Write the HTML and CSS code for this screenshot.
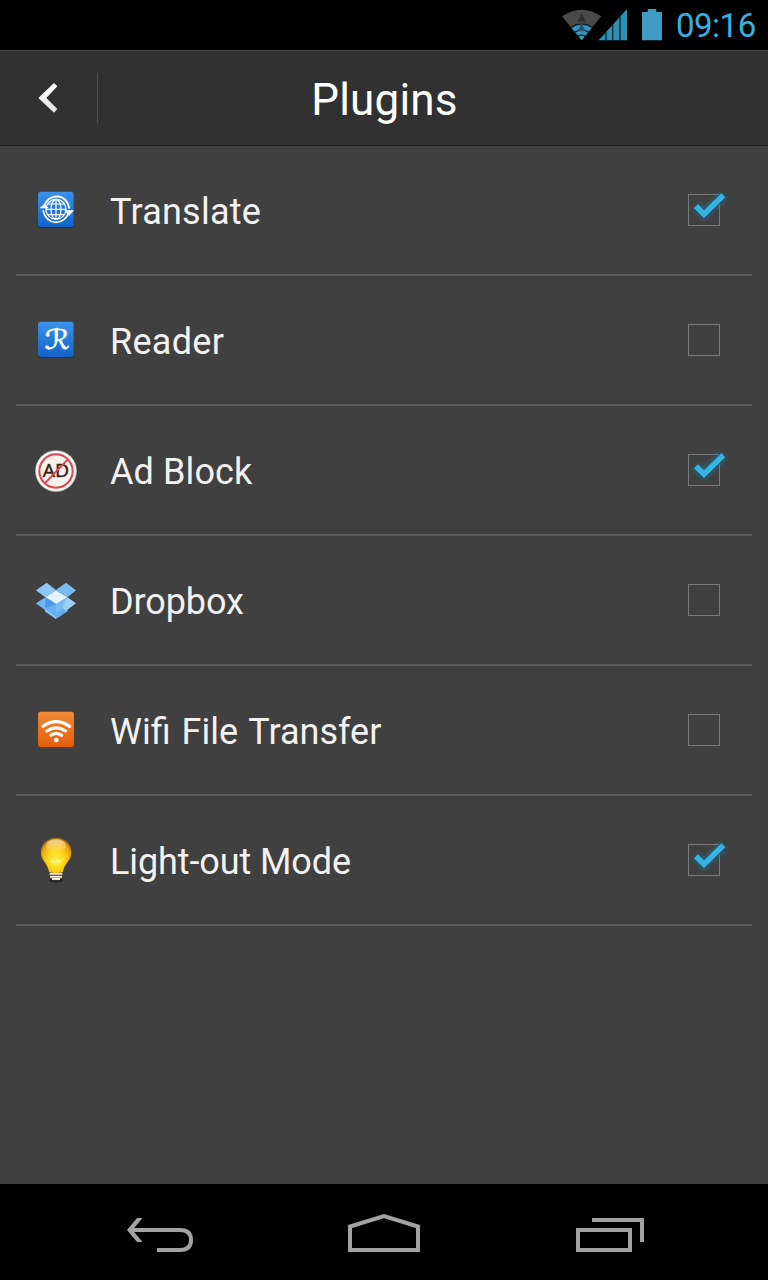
FILE: index.html
```
<!DOCTYPE html>
<html lang="en">
<head>
<meta charset="utf-8">
<title>Plugins</title>
<link rel="stylesheet" href="styles.css">
</head>
<body>
<svg class="defs" width="0" height="0" aria-hidden="true">
  <defs>
    <linearGradient id="blue" x1="0" y1="0" x2="0" y2="1"><stop offset="0" stop-color="#3b93ea"/><stop offset="1" stop-color="#1263c8"/></linearGradient>
    <linearGradient id="orange" x1="0" y1="0" x2="0" y2="1"><stop offset="0" stop-color="#f48a34"/><stop offset="1" stop-color="#e35d0c"/></linearGradient>
    <radialGradient id="bulb" cx=".5" cy=".62" r=".62"><stop offset="0" stop-color="#fff04a"/><stop offset=".45" stop-color="#ffd61a"/><stop offset=".8" stop-color="#eda50c"/><stop offset="1" stop-color="#b9720a"/></radialGradient>
    <linearGradient id="shine" x1="0" y1="0" x2="0" y2="1"><stop offset="0" stop-color="#fff" stop-opacity=".6"/><stop offset="1" stop-color="#fff" stop-opacity="0"/></linearGradient>
    <linearGradient id="arrow" x1="0" y1="0" x2="0" y2="1"><stop offset="0" stop-color="#fff"/><stop offset="1" stop-color="#e2e2e2"/></linearGradient>
    <filter id="glow" x="-50%" y="-50%" width="200%" height="200%"><feGaussianBlur stdDeviation="7"/></filter>
    <symbol id="check" viewBox="0 0 144 144">
      <rect x="19.500" y="25.500" width="93" height="93" fill="none" stroke="#7b7b7b" stroke-width="3"/>
      <path d="M42 61L66 85L124 28" fill="none" stroke="#1489b5" stroke-width="26" opacity=".6" filter="url(#glow)"/>
      <path d="M42 61L66 85L124 28" fill="none" stroke="#304850" stroke-width="22"/>
      <path d="M42 61L66 85L124 28" fill="none" stroke="#35b3e5" stroke-width="17"/>
    </symbol>
    <symbol id="box" viewBox="0 0 144 144">
      <rect x="19.500" y="25.500" width="93" height="93" fill="none" stroke="#7b7b7b" stroke-width="3"/>
    </symbol>
  </defs>
</svg>
<div class="screen">
  <div class="status">
    <svg class="status-icons" viewBox="0 0 360 150">
      <path d="M30 49Q89 10 148 49L89 121Z" fill="#4a4a4a"/>
      <path d="M89 40L77 65H101Z" fill="#303030"/>
      <path d="M57 82Q89 62 121 82L89 121Z" fill="#3796bd"/>
      <path d="M57 82Q89 62 121 82M67 97Q89 82 111 97M78 109Q89 102 100 109" fill="none" stroke="#06212d" stroke-width="4"/>
      <path d="M89 67L78 94H100Z" fill="#28576a"/>
      <path d="M140 121L225 27V121Z" fill="#3090b3"/>
      <path d="M162 96V121M182 74V121M204 50V121" stroke="#062735" stroke-width="4"/>
      <path d="M270 36H287V27H313V36H330V121H270Z" fill="#3f9cc4"/>
    </svg>
    <span class="clock">09:16</span>
  </div>
  <header class="bar">
    <div class="back"><svg class="back-icon" viewBox="0 0 60 96"><path d="M48 3L58 13L25 48L58 81L48 92L1 48Z" fill="url(#arrow)"/></svg></div>
    <h1 class="title">Plugins</h1>
  </header>
  <main class="list">
    <div class="row">
      <svg class="icon" viewBox="0 0 216 180">
        <rect x="53" y="37" width="109" height="108" rx="10" fill="#29313c"/>
        <rect x="54" y="35" width="107" height="106" rx="9" fill="url(#blue)"/>
        <g fill="none" stroke="#fff" stroke-width="3.600">
          <circle cx="108" cy="88" r="30"/><ellipse cx="108" cy="88" rx="15" ry="30"/><path d="M108 58V118M78 88H138M83 72H133M83 104H133"/>
          <path d="M72 78Q82 50 111 49Q142 51 148 86M146 98Q136 125 108 127Q77 125 69 91" stroke-width="5"/>
        </g>
        <path d="M58 85L74 71L86 85ZM133 91H162L147 108Z" fill="#fff"/>
      </svg>
      <span class="label translate">Translate</span>
      <svg class="toggle"><use href="#check"/></svg>
    </div>
    <div class="row">
      <svg class="icon" viewBox="0 0 216 180">
        <rect x="53" y="37" width="109" height="108" rx="10" fill="#29313c"/>
        <rect x="54" y="35" width="107" height="106" rx="9" fill="url(#blue)"/>
        <text class="script-r" x="74" y="116" textLength="75" lengthAdjust="spacingAndGlyphs">ℛ</text>
      </svg>
      <span class="label reader">Reader</span>
      <svg class="toggle"><use href="#box"/></svg>
    </div>
    <div class="row">
      <svg class="icon" viewBox="0 0 216 180">
        <circle cx="108" cy="93" r="63" fill="#8d8d8b"/>
        <circle cx="108" cy="93" r="61" fill="#f6f3ed"/>
        <text class="ad" x="108" y="112" text-anchor="middle" textLength="79" lengthAdjust="spacingAndGlyphs">AD</text>
        <circle cx="108" cy="93" r="50" fill="none" stroke="#da4550" stroke-width="6"/>
        <path d="M74 130L143 59" stroke="#da4550" stroke-width="6"/>
      </svg>
      <span class="label adblock">Ad Block</span>
      <svg class="toggle"><use href="#check"/></svg>
    </div>
    <div class="row">
      <svg class="icon" viewBox="0 0 216 180">
        <path d="M75 111L108 93L143 111V124L108 147L75 124Z" fill="#64adf0"/>
        <path d="M75 111L108 97V147L75 124Z" fill="#8bc8fa"/>
        <path d="M48 61L80 38L108 60L76 82Z" fill="#8ec8f6"/>
        <path d="M108 60L138 38L168 61L142 82Z" fill="#78bbf2"/>
        <path d="M48 100L76 82L108 102L78 122Z" fill="#72b7f3"/>
        <path d="M108 102L142 82L168 100L138 122Z" fill="#9cd0fa"/>
        <path d="M76 82L108 61L142 82L108 102Z" fill="#e5f5ff"/>
        <path d="M76 82L108 102V140L78 119Z" fill="#68aef0"/>
        <path d="M76 82V113L108 102Z" fill="#4798e9"/>
        <path d="M108 102L142 82L124 119L108 129Z" fill="#79bdf6"/>
      </svg>
      <span class="label dropbox">Dropbox</span>
      <svg class="toggle"><use href="#box"/></svg>
    </div>
    <div class="row">
      <svg class="icon" viewBox="0 0 216 180">
        <rect x="53" y="36" width="110" height="108" rx="9" fill="#633a22"/>
        <rect x="54" y="35" width="108" height="106" rx="8" fill="url(#orange)"/>
        <path d="M69 79Q108 51 149 79M81 93Q108 74 137 93M93 106Q108 95 125 106" fill="none" stroke="#fff" stroke-width="9.500" stroke-linecap="round"/>
        <circle cx="109" cy="120" r="7" fill="#fff"/>
      </svg>
      <span class="label wifi">Wifi File Transfer</span>
      <svg class="toggle"><use href="#box"/></svg>
    </div>
    <div class="row">
      <svg class="icon" viewBox="0 0 216 180">
        <ellipse cx="108" cy="151" rx="22" ry="7" fill="#272727"/>
        <path d="M88 124H127V145L119 151H97L88 145Z" fill="#453b29"/>
        <path d="M89 131H127M90 140H126M96 147H120" stroke="#eee7d5" stroke-width="6"/>
        <path d="M108 24C81 24 63 43 63 67C63 94 82 96 87 126Q108 133 129 126C134 96 154 94 154 67C154 43 136 24 108 24Z" fill="url(#bulb)"/>
        <ellipse cx="108" cy="48" rx="31" ry="20" fill="url(#shine)"/>
        <path d="M84 86L90 93L97 86L105 93L112 86L120 93L130 86L121 100H95Z" fill="#fff576"/>
      </svg>
      <span class="label lightout">Light-out Mode</span>
      <svg class="toggle"><use href="#check"/></svg>
    </div>
  </main>
  <nav class="nav">
    <svg class="nav-icons" viewBox="0 0 768 96" fill="none" stroke="#a3a3a3" stroke-width="4">
      <path d="M130 46H180Q191 46 191 56Q191 66 180 66H157"/>
      <path d="M127 46L137 34H142.500L132.500 46L142.500 58H137Z" fill="#a3a3a3" stroke="none"/>
      <path d="M350 66V42.500L384 32L418 42.500V66Z"/>
      <path d="M578 46H630V66H578ZM592 36H642V58"/>
    </svg>
  </nav>
</div>
</body>
</html>
```
FILE: styles.css
```
body { margin: 0; background: #404040; font-family: Roboto, sans-serif; }
.defs { position: absolute; }
.screen { display: flex; flex-direction: column; width: 768px; height: 1280px; background: #404040; overflow: hidden; }
.status { display: flex; justify-content: flex-end; height: 50px; background: #000; box-sizing: border-box; padding-right: 11px; }
.status-icons { width: 120px; height: 50px; }
.clock { width: 81px; margin-left: 4px; font-size: 33px; letter-spacing: -.5px; line-height: 52px; color: #35b0e0; white-space: nowrap; }
.bar { display: flex; align-items: center; height: 96px; box-sizing: border-box; background: #313131; border-top: 1px solid #444; border-bottom: 1px solid #1c1c1c; }
.back { display: flex; align-items: center; width: 98px; height: 50px; box-sizing: border-box; padding-left: 38px; border-right: 1px solid #505050; }
.back-icon { width: 20px; height: 32px; }
.title { flex: 1; margin: 0; padding: 3px 97px 0 0; text-align: center; font-size: 44px; font-weight: 400; letter-spacing: .2px; line-height: 96px; color: #fff; }
.list { flex: 1; padding: 0 16px; }
.row { display: flex; align-items: center; height: 130px; box-sizing: border-box; border-bottom: 2px solid #5d5d5d; }
.icon { width: 72px; height: 60px; margin-left: 4px; }
.label { flex: 1; margin-left: 18px; padding-top: 3px; font-size: 36px; color: #f2f2f2; white-space: nowrap; }
.translate { letter-spacing: .25px; }
.reader { letter-spacing: .3px; }
.adblock { letter-spacing: .1px; }
.dropbox { letter-spacing: -.1px; }
.wifi { word-spacing: 2px; }
.lightout { letter-spacing: -.1px; }
.toggle { width: 48px; height: 48px; margin-right: 22px; }
.script-r { font-family: "DejaVu Sans", sans-serif; font-size: 82px; fill: #fff; stroke: #fff; stroke-width: 1.5px; }
.ad { font-family: "Open Sans", sans-serif; font-size: 53px; fill: #35200e; stroke: #35200e; stroke-width: 1.2px; }
.nav { height: 96px; background: #000; }
.nav-icons { display: block; width: 768px; height: 96px; }
```
